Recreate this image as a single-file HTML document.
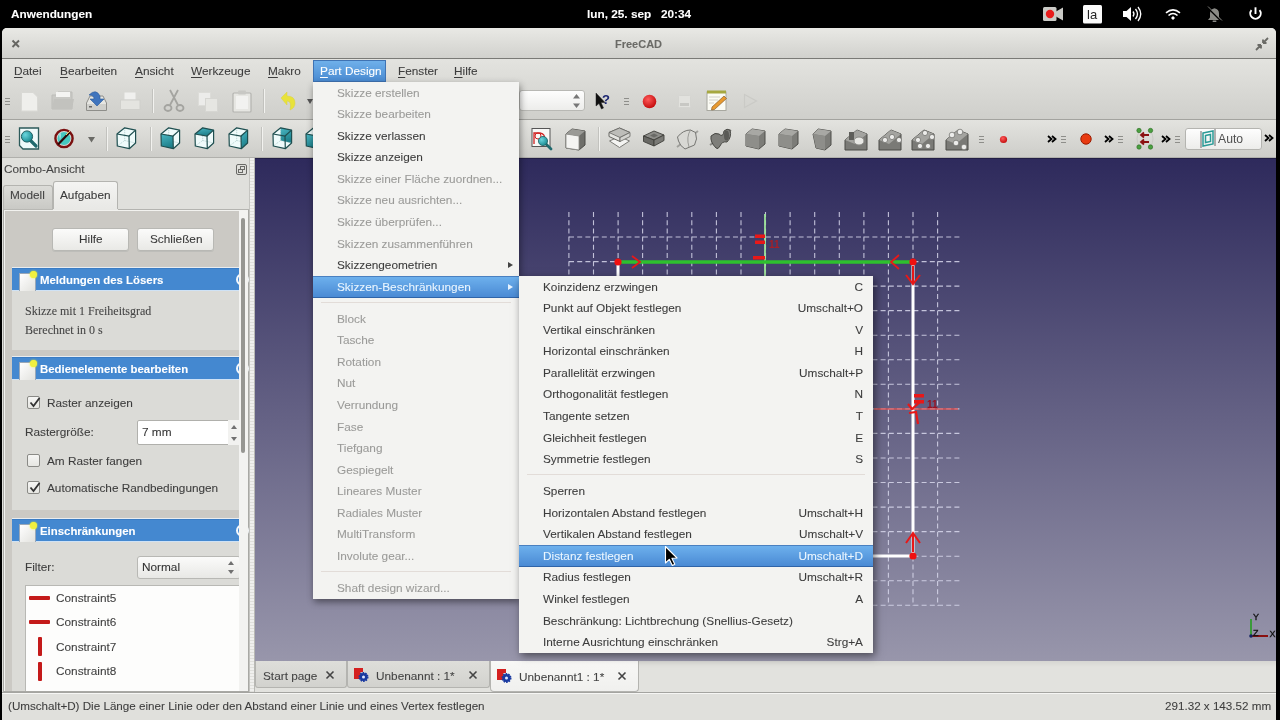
<!DOCTYPE html>
<html><head><meta charset="utf-8">
<style>
*{box-sizing:border-box;margin:0;padding:0}
html,body{width:1280px;height:720px;overflow:hidden;background:#000}
body>*{will-change:transform}
body{position:relative;font-family:"Liberation Sans",sans-serif;font-size:11.8px;color:#3d3d3d;-webkit-text-stroke:0.08px currentColor}
.a{position:absolute}
.t{position:absolute;white-space:nowrap;line-height:14px}
.wb{color:#fff;font-weight:bold}
#win{left:2px;top:28px;width:1274px;height:692px;background:#e2e2de;border-radius:5px 5px 0 0;overflow:hidden}
#title{left:2px;top:28px;width:1274px;height:30px;border-radius:5px 5px 0 0;background:linear-gradient(#e9e9e5,#d1d1cd)}
#mtb{left:2px;top:59px;width:1274px;height:60px;background:linear-gradient(#e3e3df,#cfcfcb)}
#tb2{left:2px;top:120px;width:1274px;height:37px;background:linear-gradient(#e3e3df,#cdcdc9)}
#vp{left:255px;top:158px;width:1021px;height:503px;background:linear-gradient(#2e2a5c,#9896ab);overflow:hidden;border-top:1px solid #221e45}
.mi{position:absolute;left:0;width:100%;height:21.56px;line-height:21.56px;white-space:nowrap}
.dis{color:#9b9b99}
.sc{position:absolute;right:10px;top:0.6px}
.mi>span:not(.arr){top:0.6px}
.sep{position:absolute;left:8px;right:8px;height:1px;background:#e2dcd8}
.hl{background:linear-gradient(#6fb2ee,#4a8ad4);color:#eaf6ff;border-bottom:1px solid #2f64a8;box-shadow:inset 0 1px 0 #4a80c0}
.arr{position:absolute;right:6px;top:8px;width:0;height:0;border-left:5px solid #444;border-top:3px solid transparent;border-bottom:3px solid transparent}
.hl .arr{border-left-color:#e8f4ff}
.grip{position:absolute;width:6px;height:9px;border-top:1px solid #8a8a86;border-bottom:1px solid #8a8a86}
.grip:after{content:"";position:absolute;left:0;top:3px;width:6px;height:1px;background:#8a8a86}
.vs{position:absolute;width:1px;height:26px;background:#c4c4c0;box-shadow:1px 0 0 #f0f0ec}
.u{text-decoration:underline;text-underline-offset:2px;text-decoration-thickness:1px}
.hdr{left:12px;width:227px;height:23px;background:#4488d0;border-top:1px solid #3a7cc4;border-bottom:1px solid #cfe2f5;box-shadow:0 -1px 0 #e9ecef}
.hdr:before{content:"";position:absolute;left:7px;top:4px;width:15px;height:17px;background:linear-gradient(135deg,#fff,#e2e2de);border:1px solid #9aa8b8}
.hdr:after{content:"";position:absolute;left:18px;top:2px;width:7px;height:7px;border-radius:50%;background:#f0f040;box-shadow:0 0 2px #ff0}
.hdt{left:40px;color:#fff;font-weight:bold;font-size:11.4px}
.cb{left:27px;width:13px;height:13px;border:1px solid #8a8a86;border-radius:2px;background:linear-gradient(#f6f6f4,#e6e6e2)}
.tri-u{width:0;height:0;border-left:3px solid transparent;border-right:3px solid transparent;border-bottom:4px solid #707070}
.tri-d{width:0;height:0;border-left:3px solid transparent;border-right:3px solid transparent;border-top:4px solid #707070}
</style></head>
<body>
<!-- top panel -->
<div class="t wb" style="left:11px;top:7px">Anwendungen</div>
<div class="t wb" style="left:587px;top:7px">lun, 25. sep</div>
<div class="t wb" style="left:661px;top:7px">20:34</div>
<svg class="a" style="left:1040px;top:0" width="240" height="28">
<rect x="3" y="7" width="13.5" height="14" rx="1.5" fill="#cbcbc7"/><path d="M16 11.5 L23 7.5 V20.5 L16 16.5 Z" fill="#cbcbc7"/><circle cx="10" cy="14" r="4.2" fill="#e81c1c"/>
<rect x="43" y="5" width="19" height="18.5" rx="1.5" fill="#fafafa"/><text x="47" y="19" font-family="Liberation Sans" font-size="13" fill="#222">la</text>
<path d="M83 11 H86.5 L91 7 V21 L86.5 17 H83 Z" fill="#fff"/><path d="M93 11.5 Q95 14 93 16.5 M95.5 9 Q99.5 14 95.5 19 M98 7 Q103.5 14 98 21" fill="none" stroke="#fff" stroke-width="1.3"/>
<path d="M126 12.8 Q133 7 140 12.8" fill="none" stroke="#fff" stroke-width="1.6"/><path d="M128.5 15.5 Q133 11.5 137.5 15.5" fill="none" stroke="#fff" stroke-width="1.6"/><path d="M131 18 L133 16 L135 18 L133 20 Z" fill="#fff"/>
<path d="M168 20 L170 17.5 V13.5 Q170 9 174.5 8.2 Q179 9 179 13.5 V17.5 L181 20 Z" fill="#8a8a86"/><rect x="172.5" y="20.5" width="4" height="1.5" rx="0.7" fill="#8a8a86"/><line x1="167" y1="7" x2="182" y2="22" stroke="#000" stroke-width="1.6"/><line x1="168" y1="6.5" x2="182" y2="20.5" stroke="#8a8a86" stroke-width="0.9"/>
<path d="M211.5 10.2 A5.2 5.2 0 1 0 219.5 10.2" fill="none" stroke="#fff" stroke-width="1.9"/><line x1="215.5" y1="7.3" x2="215.5" y2="14" stroke="#fff" stroke-width="1.9"/>
</svg>

<!-- window -->
<div id="win" class="a"></div>
<div id="title" class="a"></div>
<div class="a" style="left:2px;top:58px;width:1274px;height:1px;background:#7a7a76"></div>
<div id="mtb" class="a"></div>
<div class="a" style="left:2px;top:119px;width:1274px;height:1px;background:#a3a39f"></div>
<div id="tb2" class="a"></div>
<div class="a" style="left:2px;top:157px;width:1274px;height:1px;background:#b0b0ac"></div>
<div class="t" style="left:615px;top:37px;font-weight:bold;font-size:11px;color:#6a6a66">FreeCAD</div>
<svg class="a" style="left:10px;top:38px" width="12" height="12"><path d="M2.5 2.5 L9 9 M9 2.5 L2.5 9" stroke="#666662" stroke-width="1.9"/></svg>
<svg class="a" style="left:1254px;top:36px" width="16" height="16"><path d="M9 7 L14 2 M9 7 V3.5 M9 7 H12.5 M7 9 L2 14 M7 9 V12.5 M7 9 H3.5" stroke="#6a6a66" stroke-width="1.8" fill="none"/></svg>

<!-- menubar -->
<div class="t" style="left:14px;top:64px"><span class="u">D</span>atei</div>
<div class="t" style="left:60px;top:64px"><span class="u">B</span>earbeiten</div>
<div class="t" style="left:135px;top:64px"><span class="u">A</span>nsicht</div>
<div class="t" style="left:191px;top:64px"><span class="u">W</span>erkzeuge</div>
<div class="t" style="left:268px;top:64px"><span class="u">M</span>akro</div>
<div class="a" style="left:313px;top:60px;width:73px;height:22px;background:linear-gradient(#6fb0ea,#4a8bd2);border:1px solid #3f73b3"></div>
<div class="t" style="left:320px;top:64px;color:#fff"><span class="u">P</span>art Design</div>
<div class="t" style="left:398px;top:64px"><span class="u">F</span>enster</div>
<div class="t" style="left:454px;top:64px"><span class="u">H</span>ilfe</div>

<!-- TB -->
<svg class="a" style="left:0;top:0" width="1280" height="160"><defs>
<linearGradient id="tg" x1="0" y1="0" x2="0.3" y2="1"><stop offset="0" stop-color="#4bb8c4"/><stop offset="1" stop-color="#1d7f8a"/></linearGradient>
<radialGradient id="tg2" cx="0.35" cy="0.35" r="0.7"><stop offset="0" stop-color="#6ad6de"/><stop offset="1" stop-color="#17888f"/></radialGradient>
<radialGradient id="rg" cx="0.4" cy="0.35" r="0.7"><stop offset="0" stop-color="#ff5a5a"/><stop offset="1" stop-color="#c00808"/></radialGradient>
<linearGradient id="wg" x1="0" y1="0" x2="0" y2="1"><stop offset="0" stop-color="#fefefe"/><stop offset="1" stop-color="#ececea"/></linearGradient>
</defs>
<rect x="5" y="98" width="5" height="1" fill="#8e8e8a"/>
<rect x="5" y="101" width="5" height="1" fill="#8e8e8a"/>
<rect x="5" y="104" width="5" height="1" fill="#8e8e8a"/>
<rect x="5" y="136" width="5" height="1" fill="#8e8e8a"/>
<rect x="5" y="139" width="5" height="1" fill="#8e8e8a"/>
<rect x="5" y="142" width="5" height="1" fill="#8e8e8a"/>
<path d="M21.5 92.5 H33 L37.5 97 V111 H21.5 Z" fill="#efefec" stroke="#d9d9d5"/>
<path d="M52 95 H56 L58 92 H72 V109 H52 Z" fill="#c9c9c5" stroke="#bdbdb9"/><rect x="56" y="92" width="14" height="5" fill="#f4f4f2"/><path d="M54 99 H74 L72 109 H52 Z" fill="#c2c2be"/>
<path d="M86.5 103 L90 96 H103 L106.5 103 V110.5 H86.5 Z" fill="#e6e6e2" stroke="#8e8e8a"/><rect x="87" y="104" width="19" height="6" fill="#cfcfcb"/><rect x="89" y="106" width="3" height="1.5" fill="#666"/>
<path d="M89 95 Q96 88 100 96 L100 99 L104 99 L97 106 L90 99 L94 99 Q94 95 89 95 Z" fill="#3f74bd" stroke="#2a5a9a" stroke-width="0.6"/>
<rect x="124" y="92" width="12" height="8" fill="#f0f0ee" stroke="#d8d8d4"/><path d="M120.5 100 H140 V109.5 H120.5 Z" fill="#e4e4e0" stroke="#d0d0cc"/>
<rect x="152" y="89" width="1" height="24" fill="#c2c2be"/><rect x="153" y="89" width="1" height="24" fill="#f2f2ef"/>
<g fill="none" stroke="#a4a4a0" stroke-width="1.8"><ellipse cx="168" cy="108" rx="3.5" ry="3"/><ellipse cx="180" cy="108" rx="3.5" ry="3"/><path d="M170 105 L178 90 M178 105 L170 90"/></g>
<rect x="198.5" y="92.5" width="12" height="13" fill="#ececea" stroke="#dcdcd8"/><rect x="205.5" y="98.5" width="12" height="13" fill="#e6e6e2" stroke="#d6d6d2"/>
<rect x="233" y="93" width="18" height="19" rx="1" fill="#e6e6e2" stroke="#b4b4b0" stroke-width="1.2"/><rect x="236" y="96" width="12" height="13" fill="#f2f2f0"/><rect x="238" y="90.5" width="8" height="4" rx="1" fill="#c8c8c4"/>
<rect x="263" y="89" width="1" height="24" fill="#c2c2be"/><rect x="264" y="89" width="1" height="24" fill="#f2f2ef"/>
<path d="M281 98 L287 92 L287 96 Q295 96 295 103 Q295 108 290 110 Q292 101 287 101 L287 105 Z" fill="#e8e23a" stroke="#d8d040" stroke-width="0.5"/>
<path d="M307 99 L313 99 L310 104 Z" fill="#555"/>
<rect x="519.5" y="90.5" width="65" height="20" rx="2.5" fill="url(#wg)" stroke="#b8b8b4"/>
<path d="M573 98.5 L576.5 94 L580 98.5 Z M573 103.5 L580 103.5 L576.5 108 Z" fill="#777"/>
<path d="M596 93 L596 106 L599 103.5 L601.5 109 L603.5 108 L601 102.5 L605 102.5 Z" fill="#111" stroke="#222" stroke-width="0.5"/>
<text x="602" y="104" font-family="Liberation Sans" font-weight="bold" font-size="13" fill="#1a2470">?</text>
<rect x="624" y="98" width="5" height="1" fill="#8e8e8a"/>
<rect x="624" y="101" width="5" height="1" fill="#8e8e8a"/>
<rect x="624" y="104" width="5" height="1" fill="#8e8e8a"/>
<circle cx="649.5" cy="101.5" r="6.8" fill="url(#rg)"/>
<rect x="678.5" y="95.5" width="12" height="12" rx="1" fill="#e2e2de" stroke="#d4d4d0"/><rect x="680" y="103" width="9" height="3" fill="#c8c8c4"/>
<rect x="707" y="92" width="19" height="18.5" fill="#fbfbf4" stroke="#a8a8a0"/><rect x="707" y="90.5" width="19" height="3" fill="#a6a840"/><path d="M709 97 H720 M709 100 H718 M709 103 H714" stroke="#c8c8c0" stroke-width="0.8"/>
<path d="M712 107 L724 96 L726.5 98.5 L714.5 109.5 L711.5 110 Z" fill="#e89a30" stroke="#7a5020" stroke-width="0.6"/>
<path d="M744.5 94.5 L756.5 101 L744.5 107.5 Z" fill="none" stroke="#cacac6" stroke-width="1.2"/>
<path d="M19.5 128 H38.5 V149 H23 L19.5 145.5 Z" fill="#effafa" stroke="#2c5a5a" stroke-width="1.3"/>
<line x1="31" y1="141" x2="36" y2="146" stroke="#1f6a6e" stroke-width="3.2" stroke-linecap="round"/><circle cx="27" cy="136.5" r="5.6" fill="url(#tg2)" stroke="#1f5f62" stroke-width="1"/>
<circle cx="64" cy="138.5" r="6.5" fill="#46c8c0"/><path d="M58 130 Q63 133 60 140 Z" fill="#9fdcdc"/>
<circle cx="64" cy="138.5" r="8.6" fill="none" stroke="#7a1010" stroke-width="2.4"/><line x1="69.5" y1="132.5" x2="58" y2="144.5" stroke="#2a0a0a" stroke-width="2.2"/><line x1="70" y1="131" x2="66" y2="135" stroke="#f0d060" stroke-width="1"/>
<path d="M88 137 L95 137 L91.5 142.5 Z" fill="#6a6a66"/>
<rect x="106" y="127" width="1" height="24" fill="#c2c2be"/><rect x="107" y="127" width="1" height="24" fill="#f2f2ef"/>
<polygon points="117.0,134.0 124.7,127.8 135.6,130.1 135.6,143.0 129.3,148.7 117.3,146.0" fill="#effbfb"/>
<polyline points="124.7,127.8 124.7,140.5 117.3,146.0" fill="none" stroke="#8ab0b0" stroke-width="0.6" stroke-dasharray="1,1"/><line x1="124.7" y1="140.5" x2="135.6" y2="143" stroke="#8ab0b0" stroke-width="0.6" stroke-dasharray="1,1"/>
<polygon points="117.0,134.0 124.7,127.8 135.6,130.1 135.6,143.0 129.3,148.7 117.3,146.0" fill="none" stroke="#1f4f50" stroke-width="1.2" stroke-linejoin="round"/>
<polyline points="117.0,134.0 129.0,136.0 135.6,130.1" fill="none" stroke="#1f4f50" stroke-width="1.2"/><line x1="129" y1="136" x2="129.3" y2="148.7" stroke="#1f4f50" stroke-width="1.2"/>
<rect x="150" y="127" width="1" height="24" fill="#c2c2be"/><rect x="151" y="127" width="1" height="24" fill="#f2f2ef"/>
<polygon points="161.0,134.0 168.7,127.8 179.6,130.1 179.6,143.0 173.3,148.7 161.3,146.0" fill="#effbfb"/>
<polyline points="168.7,127.8 168.7,140.5 161.3,146.0" fill="none" stroke="#8ab0b0" stroke-width="0.6" stroke-dasharray="1,1"/><line x1="168.7" y1="140.5" x2="179.6" y2="143" stroke="#8ab0b0" stroke-width="0.6" stroke-dasharray="1,1"/>
<polygon points="161.0,134.0 173.0,136.0 173.3,148.7 161.3,146.0" fill="url(#tg)"/>
<polygon points="161.0,134.0 168.7,127.8 179.6,130.1 179.6,143.0 173.3,148.7 161.3,146.0" fill="none" stroke="#1f4f50" stroke-width="1.2" stroke-linejoin="round"/>
<polyline points="161.0,134.0 173.0,136.0 179.6,130.1" fill="none" stroke="#1f4f50" stroke-width="1.2"/><line x1="173" y1="136" x2="173.3" y2="148.7" stroke="#1f4f50" stroke-width="1.2"/>
<polygon points="195.0,134.0 202.7,127.8 213.6,130.1 213.6,143.0 207.3,148.7 195.3,146.0" fill="#effbfb"/>
<polyline points="202.7,127.8 202.7,140.5 195.3,146.0" fill="none" stroke="#8ab0b0" stroke-width="0.6" stroke-dasharray="1,1"/><line x1="202.7" y1="140.5" x2="213.6" y2="143" stroke="#8ab0b0" stroke-width="0.6" stroke-dasharray="1,1"/>
<polygon points="195.0,134.0 202.7,127.8 213.6,130.1 207.0,136.0" fill="url(#tg)"/>
<polygon points="195.0,134.0 202.7,127.8 213.6,130.1 213.6,143.0 207.3,148.7 195.3,146.0" fill="none" stroke="#1f4f50" stroke-width="1.2" stroke-linejoin="round"/>
<polyline points="195.0,134.0 207.0,136.0 213.6,130.1" fill="none" stroke="#1f4f50" stroke-width="1.2"/><line x1="207" y1="136" x2="207.3" y2="148.7" stroke="#1f4f50" stroke-width="1.2"/>
<polygon points="229.0,134.0 236.7,127.8 247.6,130.1 247.6,143.0 241.3,148.7 229.3,146.0" fill="#effbfb"/>
<polyline points="236.7,127.8 236.7,140.5 229.3,146.0" fill="none" stroke="#8ab0b0" stroke-width="0.6" stroke-dasharray="1,1"/><line x1="236.7" y1="140.5" x2="247.6" y2="143" stroke="#8ab0b0" stroke-width="0.6" stroke-dasharray="1,1"/>
<polygon points="241.0,136.0 247.6,130.1 247.6,143.0 241.3,148.7" fill="url(#tg)"/>
<polygon points="229.0,134.0 236.7,127.8 247.6,130.1 247.6,143.0 241.3,148.7 229.3,146.0" fill="none" stroke="#1f4f50" stroke-width="1.2" stroke-linejoin="round"/>
<polyline points="229.0,134.0 241.0,136.0 247.6,130.1" fill="none" stroke="#1f4f50" stroke-width="1.2"/><line x1="241" y1="136" x2="241.3" y2="148.7" stroke="#1f4f50" stroke-width="1.2"/>
<rect x="261" y="127" width="1" height="24" fill="#c2c2be"/><rect x="262" y="127" width="1" height="24" fill="#f2f2ef"/>
<polygon points="273.0,134.0 280.7,127.8 291.6,130.1 291.6,143.0 285.3,148.7 273.3,146.0" fill="#effbfb"/>
<polygon points="280.7,127.8 291.6,130.1 291.6,143.0 280.7,140.5" fill="url(#tg)"/>
<polyline points="280.7,127.8 280.7,140.5 273.3,146.0" fill="none" stroke="#8ab0b0" stroke-width="0.6" stroke-dasharray="1,1"/><line x1="280.7" y1="140.5" x2="291.6" y2="143" stroke="#8ab0b0" stroke-width="0.6" stroke-dasharray="1,1"/>
<polygon points="273.0,134.0 280.7,127.8 291.6,130.1 291.6,143.0 285.3,148.7 273.3,146.0" fill="none" stroke="#1f4f50" stroke-width="1.2" stroke-linejoin="round"/>
<polyline points="273.0,134.0 285.0,136.0 291.6,130.1" fill="none" stroke="#1f4f50" stroke-width="1.2"/><line x1="285" y1="136" x2="285.3" y2="148.7" stroke="#1f4f50" stroke-width="1.2"/>
<polygon points="306.0,134.0 313.7,127.8 324.6,130.1 324.6,143.0 318.3,148.7 306.3,146.0" fill="#effbfb"/>
<polyline points="313.7,127.8 313.7,140.5 306.3,146.0" fill="none" stroke="#8ab0b0" stroke-width="0.6" stroke-dasharray="1,1"/><line x1="313.7" y1="140.5" x2="324.6" y2="143" stroke="#8ab0b0" stroke-width="0.6" stroke-dasharray="1,1"/>
<polygon points="306.0,134.0 318.0,136.0 318.3,148.7 306.3,146.0" fill="url(#tg)"/>
<polygon points="306.0,134.0 313.7,127.8 324.6,130.1 324.6,143.0 318.3,148.7 306.3,146.0" fill="none" stroke="#1f4f50" stroke-width="1.2" stroke-linejoin="round"/>
<polyline points="306.0,134.0 318.0,136.0 324.6,130.1" fill="none" stroke="#1f4f50" stroke-width="1.2"/><line x1="318" y1="136" x2="318.3" y2="148.7" stroke="#1f4f50" stroke-width="1.2"/>
<rect x="532" y="128.5" width="18" height="18" fill="#f8f8f6" stroke="#555" stroke-width="1"/><path d="M534 144 V133 H540 Q546 134 544 140" fill="none" stroke="#d02020" stroke-width="1.3"/><circle cx="538" cy="136" r="3" fill="none" stroke="#d02020" stroke-width="1"/>
<line x1="546" y1="144" x2="551" y2="149" stroke="#1f6a6e" stroke-width="2.8" stroke-linecap="round"/><circle cx="543" cy="141" r="4.6" fill="url(#tg2)" stroke="#1f5f62" stroke-width="0.8"/>
<polygon points="566,134 572,129 585,131 585,145 579,150 566,148" fill="#6e6e6a" stroke="#4a4a46"/><polygon points="566,134 579,136 579,150 566,148" fill="#f4f4f2" stroke="#8a8a86" stroke-width="0.8"/><polygon points="566,134 572,129 585,131 579,136" fill="#9a9a96"/>
<rect x="598" y="127" width="1" height="24" fill="#c2c2be"/><rect x="599" y="127" width="1" height="24" fill="#f2f2ef"/>
<polygon points="609.5,141 619.5,136.5 629.5,141 619.5,147.5" fill="#f4f4f2" stroke="#7a7a76" stroke-width="1"/>
<polygon points="609,132.5 619.5,128 630,132.5 620,137.5 620,141.5 609,136.5" fill="#e6e6e2" stroke="#666662" stroke-width="1"/><polygon points="609,132.5 619.5,128 630,132.5 620,137.5" fill="#bdbdb9" stroke="#666662" stroke-width="0.8"/><polygon points="620,137.5 630,132.5 630,136.5 620,141.5" fill="#d4d4d0" stroke="#666662" stroke-width="0.8"/>
<g stroke="#3e3e3a" stroke-width="0.9"><polygon points="643.5,136 654,131 664,135 654,140" fill="#8e8e8a"/><polygon points="643.5,136 654,140 654,146 643.5,141.5" fill="#686864"/><polygon points="654,140 664,135 664,140.5 654,146" fill="#7a7a76"/></g><polygon points="650,135.5 654,133.5 658,135.5 654,137.5" fill="#6a6a66"/>
<line x1="677" y1="147" x2="698" y2="131" stroke="#a0a09c" stroke-width="2"/>
<path d="M677.5 137 Q683 130 690.5 130 L695.5 132.5 Q698 139 694.5 145 L685 149 Q680 146 678.5 141 Z" fill="#d8d8d4" stroke="#6a6a66" stroke-width="0.9"/><path d="M690.5 130 Q686 137 689 147" fill="none" stroke="#8a8a86" stroke-width="0.8"/>
<line x1="710" y1="145" x2="731" y2="130" stroke="#8a8a86" stroke-width="2"/>
<path d="M711 136 Q715 132 719 134 Q723 138 724 131 Q727 128 730 130 Q732 137 727 142 Q722 141 720 146 Q718 150 716 148 Q710 142 711 136 Z" fill="#7e7e7a" stroke="#3e3e3a" stroke-width="0.9"/><ellipse cx="726.5" cy="135.5" rx="2.5" ry="5" fill="#5a5a56"/>
<polygon points="746,134 752,129 765,131 765,144 759,149 746,146" fill="#7c7c78" stroke="#4e4e4a" stroke-width="1"/>
<polygon points="746,134 752,129 765,131 759,136" fill="#a8a8a4"/>
<polygon points="746,134 759,136 759,149 746,146" fill="#8e8e8a"/>
<polygon points="779,134 785,129 798,131 798,144 792,149 779,146" fill="#7c7c78" stroke="#4e4e4a" stroke-width="1"/>
<polygon points="779,134 785,129 798,131 792,136" fill="#a8a8a4"/>
<polygon points="779,134 792,136 792,149 779,146" fill="#8e8e8a"/>
<polygon points="813,134 818,129 831,131 831,145 825,150 816,148" fill="#7c7c78" stroke="#4e4e4a"/><polygon points="813,134 818,129 831,131 825,136" fill="#a8a8a4"/><polygon points="813,134 825,136 825,150 816,148" fill="#8e8e8a"/>
<polygon points="845,140 857,130 867,134 867,150 845,150" fill="#7a7a76" stroke="#4a4a46"/><polygon points="845,140 857,130 867,134 855,144" fill="#a4a4a0"/>
<polygon points="879,140 891,130 901,134 901,150 879,150" fill="#7a7a76" stroke="#4a4a46"/><polygon points="879,140 891,130 901,134 889,144" fill="#a4a4a0"/>
<polygon points="912,140 924,130 934,134 934,150 912,150" fill="#7a7a76" stroke="#4a4a46"/><polygon points="912,140 924,130 934,134 922,144" fill="#a4a4a0"/>
<polygon points="946,140 958,130 968,134 968,150 946,150" fill="#7a7a76" stroke="#4a4a46"/><polygon points="946,140 958,130 968,134 956,144" fill="#a4a4a0"/>
<rect x="849" y="132" width="5" height="8" fill="#5e5e5a"/><ellipse cx="859" cy="141" rx="5" ry="4" fill="#e8e8e4" stroke="#8a8a86"/>
<circle cx="885" cy="140" r="2.6" fill="#ececea" stroke="#6a6a66" stroke-width="0.7"/>
<circle cx="892" cy="137" r="2.6" fill="#ececea" stroke="#6a6a66" stroke-width="0.7"/>
<circle cx="899" cy="140" r="2.6" fill="#ececea" stroke="#6a6a66" stroke-width="0.7"/>
<circle cx="918" cy="140" r="2.6" fill="#ececea" stroke="#6a6a66" stroke-width="0.7"/>
<circle cx="925" cy="133" r="2.6" fill="#ececea" stroke="#6a6a66" stroke-width="0.7"/>
<circle cx="932" cy="137" r="2.6" fill="#ececea" stroke="#6a6a66" stroke-width="0.7"/>
<circle cx="920" cy="146" r="2.6" fill="#ececea" stroke="#6a6a66" stroke-width="0.7"/>
<circle cx="928" cy="146" r="2.6" fill="#ececea" stroke="#6a6a66" stroke-width="0.7"/>
<circle cx="952" cy="135" r="2.8" fill="#ececea" stroke="#6a6a66" stroke-width="0.7"/>
<circle cx="960" cy="132" r="2.8" fill="#ececea" stroke="#6a6a66" stroke-width="0.7"/>
<circle cx="956" cy="143" r="2.8" fill="#ececea" stroke="#6a6a66" stroke-width="0.7"/>
<circle cx="964" cy="147" r="2.8" fill="#ececea" stroke="#6a6a66" stroke-width="0.7"/>
<rect x="979" y="136" width="5" height="1" fill="#8e8e8a"/>
<rect x="979" y="139" width="5" height="1" fill="#8e8e8a"/>
<rect x="979" y="142" width="5" height="1" fill="#8e8e8a"/>
<circle cx="1003.5" cy="139.5" r="3.6" fill="url(#rg)"/>
<path d="M1048 136 L1051.5 139 L1048 142 M1052 136 L1055.5 139 L1052 142" fill="none" stroke="#000" stroke-width="1.8"/>
<rect x="1061" y="136" width="5" height="1" fill="#8e8e8a"/>
<rect x="1061" y="139" width="5" height="1" fill="#8e8e8a"/>
<rect x="1061" y="142" width="5" height="1" fill="#8e8e8a"/>
<circle cx="1086" cy="139" r="5.2" fill="#e83a10" stroke="#9a1a00" stroke-width="1"/>
<path d="M1105 136 L1108.5 139 L1105 142 M1109 136 L1112.5 139 L1109 142" fill="none" stroke="#000" stroke-width="1.8"/>
<rect x="1118" y="136" width="5" height="1" fill="#8e8e8a"/>
<rect x="1118" y="139" width="5" height="1" fill="#8e8e8a"/>
<rect x="1118" y="142" width="5" height="1" fill="#8e8e8a"/>
<path d="M1139 132 Q1135 138.5 1139 146" fill="none" stroke="#c8c8c4" stroke-width="1"/><path d="M1151 132 Q1155 138.5 1151 146" fill="none" stroke="#c8c8c4" stroke-width="1"/>
<circle cx="1139" cy="130.5" r="2.2" fill="#4aa040" stroke="#2a6a20" stroke-width="0.6"/>
<circle cx="1150.5" cy="130.5" r="2.2" fill="#4aa040" stroke="#2a6a20" stroke-width="0.6"/>
<circle cx="1139" cy="147" r="2.2" fill="#4aa040" stroke="#2a6a20" stroke-width="0.6"/>
<circle cx="1150.5" cy="147" r="2.2" fill="#4aa040" stroke="#2a6a20" stroke-width="0.6"/>
<g stroke="#8a1010" stroke-width="1.8" fill="none"><path d="M1141 135 H1149 M1144 132.5 L1141 135 L1144 137.5"/><path d="M1141 142 H1149 M1144 139.5 L1141 142 L1144 144.5"/></g>
<path d="M1162 136 L1165.5 139 L1162 142 M1166 136 L1169.5 139 L1166 142" fill="none" stroke="#000" stroke-width="1.8"/>
<rect x="1175" y="136" width="5" height="1" fill="#8e8e8a"/>
<rect x="1175" y="139" width="5" height="1" fill="#8e8e8a"/>
<rect x="1175" y="142" width="5" height="1" fill="#8e8e8a"/>
<rect x="1185.5" y="128.5" width="76" height="21" rx="2.5" fill="url(#wg)" stroke="#b4b4b0"/>
<g stroke="#2a9a96" stroke-width="1.5" fill="none"><polygon points="1203,133 1213,131 1213,144 1203,146"/><polygon points="1205.5,135.5 1210.5,134.5 1210.5,141.5 1205.5,142.5"/></g><path d="M1201 131 V148 M1215 129 V146" stroke="#444" stroke-width="0.8"/>
<text x="1218" y="143" font-family="Liberation Sans" font-size="12.2" fill="#505050">Auto</text>
<path d="M1265 135 L1268.5 138 L1265 141 M1269 135 L1272.5 138 L1269 141" fill="none" stroke="#000" stroke-width="1.8"/>
</svg>
<!-- /TB -->
<!-- left dock -->
<div class="a" style="left:2px;top:158px;width:253px;height:534px;background:#e0e0dc"></div>
<div class="t" style="left:4px;top:162px;color:#444">Combo-Ansicht</div>
<svg class="a" style="left:236px;top:164px" width="11" height="11"><rect x="0.5" y="0.5" width="10" height="10" rx="1.5" fill="none" stroke="#6a6a66"/><rect x="4.5" y="2.5" width="4" height="3" fill="none" stroke="#6a6a66"/><rect x="2.5" y="5.5" width="4" height="3" fill="#e0e0dc" stroke="#6a6a66"/></svg>
<!-- splitter -->
<div class="a" style="left:249px;top:158px;width:6px;height:534px;background:repeating-linear-gradient(#f0f0ee 0 2px,#e0e0dc 2px 3px);border-left:1px solid #c4c4c0;border-right:1px solid #b8b8b4"></div>
<!-- tabs -->
<div class="a" style="left:3px;top:185px;width:50px;height:24px;border:1px solid #b4b4b0;border-bottom:none;border-radius:3px 3px 0 0;background:linear-gradient(#dcdcd8,#c9c9c5)"></div>
<div class="t" style="left:10px;top:188px;color:#444">Modell</div>
<div class="a" style="left:53px;top:181px;width:65px;height:29px;border:1px solid #b4b4b0;border-bottom:none;border-radius:3px 3px 0 0;background:linear-gradient(#f4f4f2,#e8e8e5)"></div>
<div class="t" style="left:60px;top:187.5px;color:#3a3a3a">Aufgaben</div>
<!-- tab pane -->
<div class="a" style="left:3px;top:209px;width:246px;height:483px;border:1px solid #a9a9a5;border-top-color:#b8b8b4;background:#cbc9c4;box-shadow:inset 1px 1px 0 #f2f2ef"></div>
<div class="a" style="left:118px;top:209px;width:130px;height:1px;background:#b4b4b0"></div>
<div class="a" style="left:53px;top:209px;width:65px;height:1px;background:#e8e8e5"></div>
<!-- buttons -->
<div class="a" style="left:52px;top:228px;width:77px;height:23px;border:1px solid #b8b8b4;border-radius:3px;background:linear-gradient(#fbfbfa,#e9e9e6);box-shadow:0 1px 0 #bdbdb9"></div>
<div class="t" style="left:79px;top:232px;color:#3a3a3a">Hilfe</div>
<div class="a" style="left:137px;top:228px;width:77px;height:23px;border:1px solid #b8b8b4;border-radius:3px;background:linear-gradient(#fbfbfa,#e9e9e6);box-shadow:0 1px 0 #bdbdb9"></div>
<div class="t" style="left:150px;top:232px;color:#3a3a3a">Schließen</div>
<!-- section 1 -->
<div class="a hdr" style="top:268px"></div><div class="a" style="left:236px;top:273px;width:13px;height:13px;border-radius:50%;border:2px solid #f4f8fc"></div>
<div class="t hdt" style="top:273px">Meldungen des Lösers</div>
<div class="a" style="left:12px;top:291px;width:227px;height:59px;background:#dbdbd7"></div>
<div class="t" style="left:25px;top:304px;font-family:'Liberation Serif',serif;font-size:12px;color:#444">Skizze mit 1 Freiheitsgrad</div>
<div class="t" style="left:25px;top:323px;font-family:'Liberation Serif',serif;font-size:12px;color:#444">Berechnet in 0 s</div>
<!-- section 2 -->
<div class="a hdr" style="top:357px"></div><div class="a" style="left:236px;top:362px;width:13px;height:13px;border-radius:50%;border:2px solid #f4f8fc"></div>
<div class="t hdt" style="top:362px">Bedienelemente bearbeiten</div>
<div class="a" style="left:12px;top:380px;width:227px;height:130px;background:#dbdbd7"></div>
<div class="a cb" style="top:396px"></div><svg class="a" style="left:28px;top:396px" width="14" height="13"><path d="M2.5 6.5 L5.5 10 L11.5 2" fill="none" stroke="#333" stroke-width="1.8"/></svg>
<div class="t" style="left:47px;top:395.5px">Raster anzeigen</div>
<div class="t" style="left:25px;top:425px">Rastergröße:</div>
<div class="a" style="left:137px;top:420px;width:92px;height:25px;border:1px solid #b0b0ac;background:#fff;border-radius:2px 0 0 2px"></div>
<div class="t" style="left:142px;top:425px;color:#333">7 mm</div>
<div class="a" style="left:228px;top:420px;width:11px;height:25px;background:#f2f2f0"></div>
<div class="a tri-u" style="left:231px;top:424.5px"></div><div class="a tri-d" style="left:231px;top:437px"></div>
<div class="a cb" style="top:454px"></div>
<div class="t" style="left:47px;top:454px">Am Raster fangen</div>
<div class="a cb" style="top:481px"></div><svg class="a" style="left:28px;top:481px" width="14" height="13"><path d="M2.5 6.5 L5.5 10 L11.5 2" fill="none" stroke="#333" stroke-width="1.8"/></svg>
<div class="t" style="left:47px;top:481px">Automatische Randbedingungen</div>
<!-- section 3 -->
<div class="a hdr" style="top:519px"></div><div class="a" style="left:236px;top:524px;width:13px;height:13px;border-radius:50%;border:2px solid #f4f8fc"></div>
<div class="t hdt" style="top:524px">Einschränkungen</div>
<div class="a" style="left:12px;top:542px;width:227px;height:149px;background:#dbdbd7"></div>
<div class="t" style="left:25px;top:560px">Filter:</div>
<div class="a" style="left:137px;top:556px;width:104px;height:23px;border:1px solid #b8b8b4;border-radius:3px;background:linear-gradient(#fbfbfa,#e8e8e5)"></div>
<div class="t" style="left:142px;top:560px;color:#333">Normal</div>
<div class="a tri-u" style="left:228px;top:561px"></div><div class="a tri-d" style="left:228px;top:570px"></div>
<div class="a" style="left:25px;top:585px;width:214px;height:106px;background:#fdfdfc;border:1px solid #b8b8b4;border-right:none;border-bottom:none"></div>
<div class="a" style="left:29px;top:596px;width:21px;height:4px;background:#c41a1a;border-radius:1px"></div>
<div class="t" style="left:56px;top:591px">Constraint5</div>
<div class="a" style="left:29px;top:620px;width:21px;height:4px;background:#c41a1a;border-radius:1px"></div>
<div class="t" style="left:56px;top:615px">Constraint6</div>
<div class="a" style="left:38px;top:637px;width:4px;height:19px;background:#c41a1a;border-radius:1px"></div>
<div class="t" style="left:56px;top:640px">Constraint7</div>
<div class="a" style="left:38px;top:662px;width:4px;height:19px;background:#c41a1a;border-radius:1px"></div>
<div class="t" style="left:56px;top:664px">Constraint8</div>
<!-- scrollbar -->
<div class="a" style="left:239px;top:210px;width:9px;height:481px;background:#f3f3f1"></div>
<div class="a" style="left:241px;top:218px;width:4px;height:235px;background:#969692;border-radius:2px"></div>

<!-- viewport -->
<div id="vp" class="a"></div>
<!-- VP -->
<svg class="a" style="left:255px;top:158px" width="1021" height="503">
<path d="M313.9 54 V448 M338.5 54 V448 M363.1 54 V448 M387.6 54 V448 M412.2 54 V448 M436.8 54 V448 M461.4 54 V448 M486.0 54 V448 M510.5 54 V448 M535.1 54 V448 M559.7 54 V448 M584.3 54 V448 M608.9 54 V448 M633.4 54 V448 M658.0 54 V448 M682.6 54 V448" stroke="#d8d8ec" stroke-width="1.1" stroke-dasharray="5,3.2" fill="none" opacity="0.85"/>
<path d="M314 79.0 H707 M314 103.6 H707 M314 128.1 H707 M314 152.6 H707 M314 177.2 H707 M314 201.8 H707 M314 226.3 H707 M314 250.9 H707 M314 275.4 H707 M314 300.0 H707 M314 324.5 H707 M314 349.1 H707 M314 373.6 H707 M314 398.2 H707 M314 422.7 H707 M314 447.2 H707" stroke="#d8d8ec" stroke-width="1.1" stroke-dasharray="5,3.2" fill="none" opacity="0.85"/>
<line x1="510" y1="56" x2="510" y2="448" stroke="#9ee49a" stroke-width="1.8"/>
<path d="M363 104 V398 H658 V104" fill="none" stroke="#ffffff" stroke-width="3"/>
<line x1="363" y1="104" x2="658" y2="104" stroke="#2ec02e" stroke-width="3.6"/>
<circle cx="363" cy="104" r="3.6" fill="#f01010"/>
<circle cx="658" cy="104" r="3.6" fill="#f01010"/>
<circle cx="658" cy="398" r="3.6" fill="#f01010"/>
<path d="M377 98 L385 104 L377 110" fill="none" stroke="#e81818" stroke-width="1.8"/>
<path d="M644 97 L636 104 L644 111" fill="none" stroke="#e81818" stroke-width="1.8"/>
<path d="M651 117 L658 126 L665 117 M658 108 V125" fill="none" stroke="#e81818" stroke-width="2"/>
<path d="M651 385 L658 375 L665 385 M658 376 V394" fill="none" stroke="#e81818" stroke-width="2"/>
<g fill="#e81818"><rect x="500" y="76.5" width="10" height="3.5"/><rect x="500" y="82.5" width="10" height="3.5"/><rect x="498" y="98" width="12" height="3.5"/></g>
<text x="514" y="90" font-family="Liberation Sans" font-weight="bold" font-size="10" fill="#c01818" opacity="0.8">11</text>
<line x1="619" y1="251" x2="703" y2="251" stroke="#e05050" stroke-width="1.5" opacity="0.9"/>
<g fill="#e81818"><rect x="659" y="236" width="10" height="3.5"/><rect x="659" y="242" width="10" height="3.5"/></g>
<path d="M653 246 L657 251 L665 244 M654 255 L661 254 L663 266" fill="none" stroke="#e81818" stroke-width="2.2"/>
<text x="672" y="250" font-family="Liberation Sans" font-weight="bold" font-size="10" fill="#9a1020">11</text>
<line x1="996" y1="478" x2="996" y2="461" stroke="#3a9a3a" stroke-width="2"/>
<line x1="996" y1="478" x2="1013" y2="478" stroke="#8a1010" stroke-width="2"/>
<circle cx="996" cy="478" r="1.8" fill="#102060"/>
<g font-family="Liberation Sans" font-size="9" fill="#111" stroke="#111" stroke-width="0.3"><text x="998" y="462">Y</text><text x="998" y="478">Z</text><text x="1014.5" y="478.5">X</text></g>
</svg>
<!-- /VP -->

<!-- tabbar -->
<div class="a" style="left:255px;top:661px;width:1021px;height:32px;background:linear-gradient(#d6d6d2,#e2e2de 6px,#e2e2de);border-bottom:1px solid #a4a4a0"></div>
<div class="a" style="left:255px;top:661px;width:92px;height:27px;border:1px solid #b4b4b0;border-top:none;border-radius:0 0 3px 3px;background:linear-gradient(#dededa,#d2d2ce)"></div>
<div class="t" style="left:263px;top:668.5px;color:#444">Start page</div>
<svg class="a" style="left:325px;top:670px" width="10" height="10"><path d="M1.5 1.5 L8.5 8.5 M8.5 1.5 L1.5 8.5" stroke="#444" stroke-width="1.6"/></svg>
<div class="a" style="left:347px;top:661px;width:143px;height:27px;border:1px solid #b4b4b0;border-top:none;border-radius:0 0 3px 3px;background:linear-gradient(#dededa,#d2d2ce)"></div>
<svg class="a" style="left:353px;top:667px" width="16" height="16"><rect x="1" y="1" width="6.5" height="11" fill="#d42020"/><rect x="1" y="1" width="9" height="4" fill="#d42020"/><circle cx="10.5" cy="10" r="4" fill="#1a3aa0" stroke="#1a3aa0" stroke-width="2" stroke-dasharray="1.5,1"/><circle cx="10.5" cy="10" r="1.5" fill="#e0e8ff"/></svg>
<div class="t" style="left:376px;top:668.5px;color:#444">Unbenannt : 1*</div>
<svg class="a" style="left:468px;top:670px" width="10" height="10"><path d="M1.5 1.5 L8.5 8.5 M8.5 1.5 L1.5 8.5" stroke="#444" stroke-width="1.6"/></svg>
<div class="a" style="left:490px;top:661px;width:149px;height:31px;border:1px solid #b4b4b0;border-top:none;border-radius:0 0 4px 4px;background:linear-gradient(#f8f8f6,#f0f0ee)"></div>
<svg class="a" style="left:496px;top:668px" width="16" height="16"><rect x="1" y="1" width="6.5" height="11" fill="#d42020"/><rect x="1" y="1" width="9" height="4" fill="#d42020"/><circle cx="10.5" cy="10" r="4" fill="#1a3aa0" stroke="#1a3aa0" stroke-width="2" stroke-dasharray="1.5,1"/><circle cx="10.5" cy="10" r="1.5" fill="#e0e8ff"/></svg>
<div class="t" style="left:519px;top:669.5px;color:#444">Unbenannt1 : 1*</div>
<svg class="a" style="left:617px;top:671px" width="10" height="10"><path d="M1.5 1.5 L8.5 8.5 M8.5 1.5 L1.5 8.5" stroke="#444" stroke-width="1.6"/></svg>

<!-- status -->
<div class="a" style="left:2px;top:692px;width:1274px;height:1px;background:#a4a4a0"></div>
<div class="a" style="left:2px;top:693px;width:1274px;height:27px;background:#e0e0dc;border-top:1px solid #f6f6f4"></div>
<div class="t" style="left:8px;top:699px;font-size:11.65px">(Umschalt+D) Die Länge einer Linie oder den Abstand einer Linie und eines Vertex festlegen</div>
<div class="t" style="right:9px;top:699px;font-size:11.65px">291.32 x 143.52 mm</div>

<!-- dropdown menu -->
<div class="a" style="left:313px;top:82px;width:206px;height:517px;background:#f3f3f1;box-shadow:1px 3px 7px rgba(0,0,0,.45)">
<div class="mi dis" style="top:0.00px"><span style="position:absolute;left:24px">Skizze erstellen</span></div>
<div class="mi dis" style="top:21.56px"><span style="position:absolute;left:24px">Skizze bearbeiten</span></div>
<div class="mi" style="top:43.12px"><span style="position:absolute;left:24px">Skizze verlassen</span></div>
<div class="mi" style="top:64.68px"><span style="position:absolute;left:24px">Skizze anzeigen</span></div>
<div class="mi dis" style="top:86.24px"><span style="position:absolute;left:24px">Skizze einer Fläche zuordnen...</span></div>
<div class="mi dis" style="top:107.80px"><span style="position:absolute;left:24px">Skizze neu ausrichten...</span></div>
<div class="mi dis" style="top:129.36px"><span style="position:absolute;left:24px">Skizze überprüfen...</span></div>
<div class="mi dis" style="top:150.92px"><span style="position:absolute;left:24px">Skizzen zusammenführen</span></div>
<div class="mi" style="top:172.48px"><span style="position:absolute;left:24px">Skizzengeometrien</span><span class="arr"></span></div>
<div class="mi hl" style="top:194.04px"><span style="position:absolute;left:24px">Skizzen-Beschränkungen</span><span class="arr"></span></div>
<div class="sep" style="top:219.80px"></div>
<div class="mi dis" style="top:226.20px"><span style="position:absolute;left:24px">Block</span></div>
<div class="mi dis" style="top:247.76px"><span style="position:absolute;left:24px">Tasche</span></div>
<div class="mi dis" style="top:269.32px"><span style="position:absolute;left:24px">Rotation</span></div>
<div class="mi dis" style="top:290.88px"><span style="position:absolute;left:24px">Nut</span></div>
<div class="mi dis" style="top:312.44px"><span style="position:absolute;left:24px">Verrundung</span></div>
<div class="mi dis" style="top:334.00px"><span style="position:absolute;left:24px">Fase</span></div>
<div class="mi dis" style="top:355.56px"><span style="position:absolute;left:24px">Tiefgang</span></div>
<div class="mi dis" style="top:377.12px"><span style="position:absolute;left:24px">Gespiegelt</span></div>
<div class="mi dis" style="top:398.68px"><span style="position:absolute;left:24px">Lineares Muster</span></div>
<div class="mi dis" style="top:420.24px"><span style="position:absolute;left:24px">Radiales Muster</span></div>
<div class="mi dis" style="top:441.80px"><span style="position:absolute;left:24px">MultiTransform</span></div>
<div class="mi dis" style="top:463.36px"><span style="position:absolute;left:24px">Involute gear...</span></div>
<div class="sep" style="top:489.12px"></div>
<div class="mi dis" style="top:495.52px"><span style="position:absolute;left:24px">Shaft design wizard...</span></div>
</div>

<!-- submenu -->
<div class="a" style="left:519px;top:276px;width:354px;height:377px;background:#f3f3f1;box-shadow:2px 3px 8px rgba(0,0,0,.5)">
<div class="mi" style="top:0.00px"><span style="position:absolute;left:24px">Koinzidenz erzwingen</span><span class="sc">C</span></div>
<div class="mi" style="top:21.56px"><span style="position:absolute;left:24px">Punkt auf Objekt festlegen</span><span class="sc">Umschalt+O</span></div>
<div class="mi" style="top:43.12px"><span style="position:absolute;left:24px">Vertikal einschränken</span><span class="sc">V</span></div>
<div class="mi" style="top:64.68px"><span style="position:absolute;left:24px">Horizontal einschränken</span><span class="sc">H</span></div>
<div class="mi" style="top:86.24px"><span style="position:absolute;left:24px">Parallelität erzwingen</span><span class="sc">Umschalt+P</span></div>
<div class="mi" style="top:107.80px"><span style="position:absolute;left:24px">Orthogonalität festlegen</span><span class="sc">N</span></div>
<div class="mi" style="top:129.36px"><span style="position:absolute;left:24px">Tangente setzen</span><span class="sc">T</span></div>
<div class="mi" style="top:150.92px"><span style="position:absolute;left:24px">Gleichheit festlegen</span><span class="sc">E</span></div>
<div class="mi" style="top:172.48px"><span style="position:absolute;left:24px">Symmetrie festlegen</span><span class="sc">S</span></div>
<div class="sep" style="top:198.24px"></div>
<div class="mi" style="top:204.64px"><span style="position:absolute;left:24px">Sperren</span></div>
<div class="mi" style="top:226.20px"><span style="position:absolute;left:24px">Horizontalen Abstand festlegen</span><span class="sc">Umschalt+H</span></div>
<div class="mi" style="top:247.76px"><span style="position:absolute;left:24px">Vertikalen Abstand festlegen</span><span class="sc">Umschalt+V</span></div>
<div class="mi hl" style="top:269.32px"><span style="position:absolute;left:24px">Distanz festlegen</span><span class="sc">Umschalt+D</span></div>
<div class="mi" style="top:290.88px"><span style="position:absolute;left:24px">Radius festlegen</span><span class="sc">Umschalt+R</span></div>
<div class="mi" style="top:312.44px"><span style="position:absolute;left:24px">Winkel festlegen</span><span class="sc">A</span></div>
<div class="mi" style="top:334.00px"><span style="position:absolute;left:24px">Beschränkung: Lichtbrechung (Snellius-Gesetz)</span></div>
<div class="mi" style="top:355.56px"><span style="position:absolute;left:24px">Interne Ausrichtung einschränken</span><span class="sc">Strg+A</span></div>
</div>
<svg class="a" style="left:660px;top:542px" width="24" height="28"><path d="M5.5 4.5 V21 L9.3 17.3 L12.3 23.5 L14.8 22.3 L11.9 16.2 L17 16 Z" fill="#000" stroke="#fff" stroke-width="1.1" stroke-linejoin="round"/></svg>
</body></html>
